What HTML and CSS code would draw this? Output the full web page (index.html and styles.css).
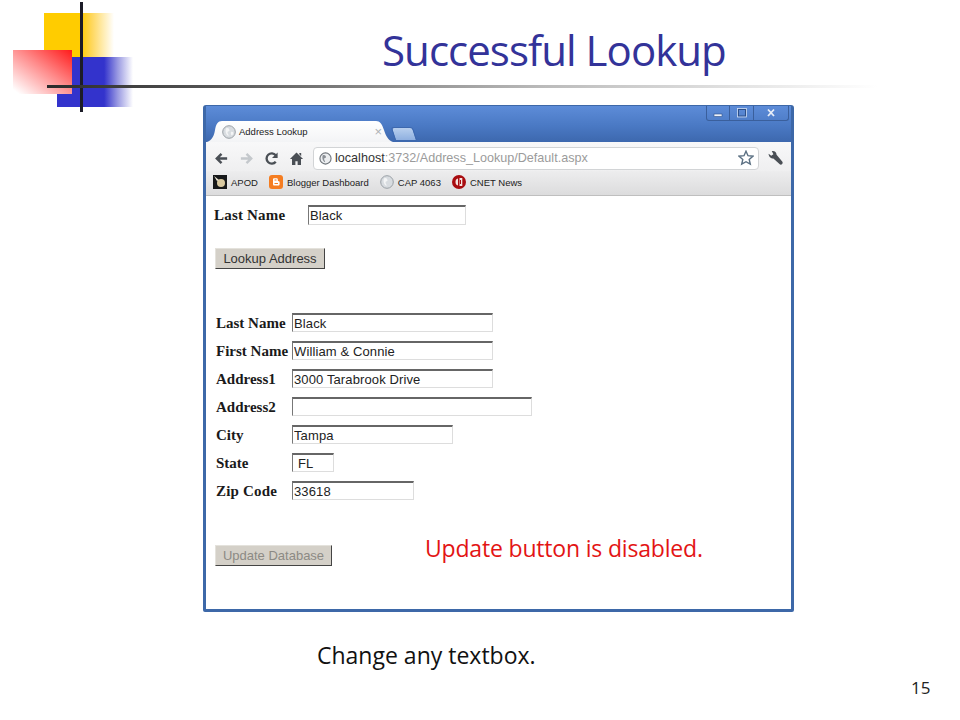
FILE: index.html
```html
<!DOCTYPE html>
<html lang="en">
<head>
<meta charset="utf-8">
<title>Successful Lookup</title>
<link rel="stylesheet" href="styles.css">
</head>
<body>
<main class="slide">
  <div class="logo-yellow"></div>
  <div class="logo-blue"></div>
  <div class="logo-red"></div>
  <div class="logo-vline"></div>
  <div class="logo-hline"></div>
  <h1 class="title">Successful Lookup</h1>

  <section class="browser">
    <div class="titlebar">
      <div class="tab">
        <svg class="fav" viewBox="0 0 14 14"><circle cx="7" cy="7" r="6.3" fill="#d8dce0" stroke="#9aa0a6"/><path d="M4 3.500c2-1 3 0 3.500 1.500s-2 1-2 2.500 1.500 2 1 3.500C4 10 3 6 4 3.500zM9 7c1-.5 2 0 2.500 1-.5 1.500-1 2-2 2.500-.5-1-1-2.500-.5-3.500z" fill="#f4f5f6"/></svg>
        <span class="tab-label">Address Lookup</span>
        <span class="tab-close">×</span>
      </div>
      <div class="newtab"></div>
      <div class="winctrls">
        <span class="winbtn"><svg viewBox="0 0 12 10"><rect x="2" y="6" width="8" height="2.500" fill="#eef3fb" stroke="#2d4f88" stroke-width=".6"/></svg></span>
        <span class="winbtn"><svg viewBox="0 0 12 10"><rect x="2.500" y="1.500" width="7" height="6.500" fill="none" stroke="#2d4f88" stroke-width="1"/><rect x="1.500" y=".5" width="9" height="8.500" fill="none" stroke="#dfe8f6" stroke-width=".7"/></svg></span>
        <span class="winbtn winbtn-close"><svg viewBox="0 0 12 10"><path d="M3 1.500l6 6.500M9 1.500L3 8" stroke="#e8eef8" stroke-width="1.800" fill="none"/></svg></span>
      </div>
    </div>

    <div class="toolbar">
      <svg class="tool" viewBox="0 0 16 16"><path d="M14 8H4M8 3L3 8l5 5" fill="none" stroke="#4a4f55" stroke-width="2.600"/></svg>
      <svg class="tool" viewBox="0 0 16 16"><path d="M2 8h10M8 3l5 5-5 5" fill="none" stroke="#c4c8cc" stroke-width="2.600"/></svg>
      <svg class="tool" viewBox="0 0 16 16"><path d="M12.500 11.500A5.500 5.500 0 1 1 12.500 4.500" fill="none" stroke="#4a4f55" stroke-width="2.500"/><path d="M14.500 1.500v6h-6z" fill="#4a4f55"/></svg>
      <svg class="tool" viewBox="0 0 16 16"><path d="M8 1.500L1 8.500h2.200V15h3.600v-4h2.400v4h3.600V8.500H15zM11 2h2v3.500l-2-2z" fill="#4a4f55"/></svg>
      <div class="omnibox">
        <svg class="fav-sm" viewBox="0 0 14 14"><circle cx="7" cy="7" r="6" fill="#eceef0" stroke="#6f757b" stroke-width="1.200"/><path d="M4 3.500c2-1 3 0 3.500 1.500s-2 1-2 2.500 1.500 2 1 3.500C4 10 3 6 4 3.500z" fill="#8b9096"/></svg>
        <span class="url"><span class="url-host">localhost</span>:3732/Address_Lookup/Default.aspx</span>
        <svg class="star" viewBox="0 0 16 16"><path d="M8 1.200l2 4.500 4.900.5-3.700 3.200 1.100 4.800L8 11.700l-4.300 2.500 1.100-4.800L1.100 6.200 6 5.700z" fill="#fff" stroke="#5a6f82" stroke-width="1.400"/></svg>
      </div>
      <svg class="wrench" viewBox="0 0 16 16"><path d="M1.500 3.500L4 5.500l2-1.500-1.500-3C7 .5 9 2 9 4.500l5.500 6.500c1 1.500-1 3.500-2.500 2.500L6 8C3.500 8 1.500 6 1.500 3.500z" fill="#4a4f55"/></svg>
    </div>

    <nav class="bookmarks">
      <span class="bm">
        <svg class="bm-icon" viewBox="0 0 14 14"><rect width="14" height="14" fill="#16181a"/><circle cx="8" cy="8" r="4" fill="#d9c9a0"/><path d="M1 1l5 4-2 1z" fill="#f1ead8"/></svg>
        APOD
      </span>
      <span class="bm">
        <svg class="bm-icon" viewBox="0 0 14 14"><rect width="14" height="14" rx="3" fill="#f57d21"/><path d="M4 4.500c0-.8.500-1.300 1.300-1.300h2.200c.8 0 1.300.5 1.300 1.300v1c0 .5.300.7 1 .7.500 0 .8.300.8.800v2.300c0 .8-.5 1.300-1.300 1.300H5.300C4.500 10.600 4 10.100 4 9.300z" fill="#fff"/><path d="M5.500 5h2M5.500 8.500h3.500" stroke="#f57d21" stroke-width="1.100"/></svg>
        Blogger Dashboard
      </span>
      <span class="bm">
        <svg class="bm-icon" viewBox="0 0 14 14"><circle cx="7" cy="7" r="6.300" fill="#d8dce0" stroke="#9aa0a6"/><path d="M4 3.500c2-1 3 0 3.500 1.500s-2 1-2 2.500 1.500 2 1 3.500C4 10 3 6 4 3.500z" fill="#f4f5f6"/></svg>
        CAP 4063
      </span>
      <span class="bm">
        <svg class="bm-icon" viewBox="0 0 14 14"><circle cx="7" cy="7" r="7" fill="#a80c10"/><path d="M6 3.500C4 3.800 3.500 5.500 3.500 7S4 10.200 6 10.500zM7.500 3h2.800v8H7.500z" fill="#f5e4e0"/><path d="M8.500 5v4" stroke="#a80c10"/></svg>
        CNET News
      </span>
    </nav>

    <form class="page">
      <div class="lookup-row">
        <label class="field-label lookup-label">Last Name</label>
        <input class="box w-lookup" value="Black">
      </div>
      <button type="button" class="btn lookup-btn">Lookup Address</button>

      <div class="fields">
        <label class="field-label">Last Name</label>
        <input class="box w-200" value="Black">
        <label class="field-label">First Name</label>
        <input class="box w-200" value="William &amp; Connie">
        <label class="field-label">Address1</label>
        <input class="box w-200" value="3000 Tarabrook Drive">
        <label class="field-label">Address2</label>
        <input class="box w-240" value="">
        <label class="field-label">City</label>
        <input class="box w-160" value="Tampa">
        <label class="field-label">State</label>
        <input class="box w-42 state" value="FL">
        <label class="field-label zip">Zip Code</label>
        <input class="box w-120" value="33618">
      </div>

      <button type="button" class="btn update-btn" disabled>Update Database</button>
    </form>
  </section>

  <p class="note-red">Update button is disabled.</p>
  <p class="note">Change any textbox.</p>
  <p class="pagenum">15</p>
</main>
</body>
</html>
```

FILE: styles.css
```css
* { box-sizing: border-box; }
html, body { margin: 0; padding: 0; background: #fff; }
.slide {
  position: relative;
  width: 960px;
  height: 720px;
  overflow: hidden;
  background: #fff;
  font-family: "Open Sans", "Noto Sans", sans-serif;
}

/* Slide-template artwork on a free canvas */
.logo-yellow {
  position: absolute; left: 44px; top: 13px; width: 70px; height: 45px;
  background: linear-gradient(90deg, #ffcc00 0, #ffcc00 52%, #ffd75a 68%, #fff 100%);
}
.logo-blue {
  position: absolute; left: 57px; top: 57px; width: 76px; height: 50px;
  background: linear-gradient(90deg, #3333cc 0, #3333cc 62%, #9a9ae2 80%, #fff 100%);
}
.logo-red {
  position: absolute; left: 13px; top: 50px; width: 59px; height: 44px;
  background: linear-gradient(to bottom left, #ff1a1a 0, #ff8a8a 45%, #fff 95%);
}
.logo-vline {
  position: absolute; left: 80px; top: 2px; width: 3px; height: 110px;
  background: #1c1c28;
}
.logo-hline {
  position: absolute; left: 47px; top: 85px; width: 830px; height: 3px;
  background: linear-gradient(90deg, #2b2b2b 0, #555 20%, #bbb 60%, #fff 100%);
}
.title {
  position: absolute; left: 382px; top: 21px; margin: 0;
  font-size: 42px; font-weight: 400; line-height: 58px;
  color: #333399; white-space: nowrap; letter-spacing: -0.95px;
}

/* Browser window */
.browser {
  position: absolute; left: 203px; top: 105px; width: 591px; height: 507px;
  display: flex; flex-direction: column;
  border: 3px solid #3d68a8; border-top: 1px solid #3d68a8; border-bottom: 3px solid #3d68a8;
  border-radius: 3px 3px 2px 2px;
  background: #fff;
}
.titlebar {
  height: 36px; display: flex; align-items: flex-end; padding-left: 1px;
  background: linear-gradient(180deg, #5d8cd8 0, #4a79c4 55%, #3d68ae 100%);
}
.tab {
  width: 186px; height: 21px; display: flex; align-items: center; gap: 3px; flex: none;
  padding: 0 6px 0 15px;
  background: linear-gradient(180deg, #fff 0, #f3f4f6 100%);
  clip-path: path("M0 21C5 19 7 15 8 9C9 3 11 0 15 0H169C173 0 175 3 177 9C179 15 181 19 186 21Z");
}
.fav { width: 14px; height: 14px; flex: none; }
.tab-label { flex: 1; font: 9.500px "Liberation Sans", sans-serif; color: #222; }
.tab-close { font: 13px "Liberation Sans", sans-serif; color: #aeb2b6; margin-right: 5px; }
.newtab {
  width: 22px; height: 14px; margin-left: 0; margin-bottom: 1px;
  background: linear-gradient(180deg, #b8cfee, #8fb0e0);
  border-radius: 3px 3px 0 0;
  transform: skewX(18deg);
  border: 1px solid #3d68ae;
}
.winctrls {
  display: flex; margin-left: auto; margin-right: 2px; align-self: flex-start;
  border: 1px solid #3a5f9c; border-top: 0; border-radius: 0 0 3px 3px; height: 15px;
}
.winbtn { width: 24px; display: flex; align-items: center; justify-content: center; border-left: 1px solid #3a5f9c; }
.winbtn:first-child { border-left: 0; width: 22px; }
.winbtn-close { width: 35px; }
.winbtn svg { width: 12px; height: 10px; }

.toolbar {
  height: 29px; display: flex; align-items: center; padding: 3px 0 0 8px;
  background: linear-gradient(180deg, #f8f8f9, #efeff0);
}
.tool { width: 15px; height: 15px; flex: none; margin-right: 10px; }
.omnibox {
  width: 446px; height: 23px; margin-left: -1px; display: flex; align-items: center; padding: 0 3px 0 5px;
  background: #fff; border: 1px solid #d2d4d6; border-radius: 4px;
}
.fav-sm { width: 13px; height: 13px; flex: none; margin-right: 3px; }
.url { flex: 1; font: 12.600px "Liberation Sans", sans-serif; color: #9b9b9b; }
.url-host { color: #333; }
.star { width: 16px; height: 16px; flex: none; margin-right: 1px; }
.wrench { width: 17px; height: 17px; flex: none; margin-left: 8px; }

.bookmarks {
  height: 25px; display: flex; align-items: center; gap: 11px; padding: 0 0 2px 7px;
  background: linear-gradient(180deg, #ededee, #dcdcdd);
  border-bottom: 1px solid #bfbfbf;
  font: 9.500px "Liberation Sans", sans-serif; color: #222;
}
.bm { display: flex; align-items: center; gap: 4px; white-space: nowrap; }
.bm-icon { width: 14px; height: 14px; flex: none; }

/* Form in the page */
.page { flex: 1; display: flex; flex-direction: column; align-items: flex-start; padding: 9px 0 0 9px; }
.lookup-row { display: flex; align-items: center; height: 20px; margin-left: -1px; }
.field-label { font: bold 15px "Liberation Serif", serif; color: #1a1a1a; white-space: nowrap; padding-top: 1px; }
.lookup-label { width: 94px; padding-top: 0; letter-spacing: 0.2px; }
.box {
  height: 19px; padding: 0 0 0 1px;
  font: 13px "Liberation Sans", sans-serif; color: #222; letter-spacing: 0.12px;
  border-style: solid; border-width: 2px 1px 1px 1px;
  border-color: #666 #ddd #ddd #777; background: #fff;
  outline: none; border-radius: 0;
}
.w-lookup { width: 158px; height: 20px; }
.w-200 { width: 201px; }
.w-240 { width: 240px; }
.w-160 { width: 161px; }
.w-120 { width: 122px; }
.w-42 { width: 42px; }
.state { padding-left: 5px; }
.zip { letter-spacing: 0.2px; }
.btn {
  font: 13px "Liberation Sans", sans-serif; padding: 0; height: 21px;
  background: #d4d0c8; border: 1px solid; border-color: #e4e2dc #444 #444 #e4e2dc; border-radius: 0;
}
.lookup-btn { width: 110px; margin-top: 23px; color: #333; }
.update-btn { width: 117px; margin-top: 45px; color: #8c8a84; }
.fields {
  display: grid; grid-template-columns: 76px 1fr; row-gap: 9px; align-items: center; justify-items: start;
  width: 330px; margin-top: 44px; padding-left: 1px;
}

/* Slide notes */
.note-red, .note, .pagenum { position: absolute; margin: 0; white-space: nowrap; }
.note-red { left: 425px; top: 531px; font-size: 23px; line-height: 34px; color: #e31414; letter-spacing: -0.18px; }
.note { left: 317px; top: 638px; font-size: 23px; line-height: 34px; color: #111; }
.pagenum { left: 911px; top: 676px; font-size: 17px; line-height: 24px; color: #222; }
```
